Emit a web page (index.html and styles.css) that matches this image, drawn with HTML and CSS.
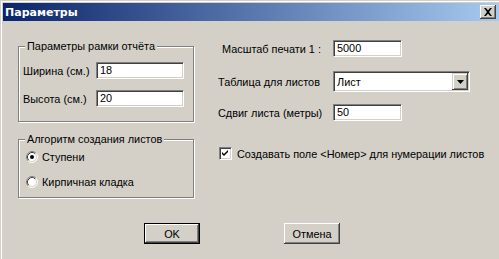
FILE: index.html
```html
<!DOCTYPE html>
<html lang="ru">
<head>
<meta charset="utf-8">
<title>Параметры</title>
<link rel="stylesheet" href="styles.css">
</head>
<body>
<div class="window">
  <div class="titlebar">
    <span class="title">Параметры</span>
    <span class="close"><svg width="10" height="8" viewBox="0 0 10 8"><path d="M1 0 L3 0 L5 2.5 L7 0 L9 0 L6 4 L9 8 L7 8 L5 5.5 L3 8 L1 8 L4 4 Z" fill="#000"/></svg></span>
  </div>
  <div class="client">
    <div class="main">
      <div class="left">
        <fieldset class="group g1">
          <legend>Параметры рамки отчёта</legend>
          <div class="g1-rows">
            <div class="frow"><span class="flabel">Ширина (см.)</span><div class="edit w88">18</div></div>
            <div class="frow"><span class="flabel">Высота (см.)</span><div class="edit w88">20</div></div>
          </div>
        </fieldset>
        <fieldset class="group g2">
          <legend>Алгоритм создания листов</legend>
          <div class="radios">
            <div class="radio-row">
              <svg class="radio" width="12" height="12" viewBox="0 0 12 12">
                <circle cx="6" cy="6" r="5" fill="#fff"/>
                <path d="M2.11 9.89 A5.5 5.5 0 0 1 9.89 2.11" fill="none" stroke="#808080"/>
                <path d="M9.89 2.11 A5.5 5.5 0 0 1 2.11 9.89" fill="none" stroke="#fff"/>
                <path d="M2.82 9.18 A4.5 4.5 0 0 1 9.18 2.82" fill="none" stroke="#404040"/>
                <path d="M9.18 2.82 A4.5 4.5 0 0 1 2.82 9.18" fill="none" stroke="#d4d0c8"/>
                <circle cx="6" cy="6" r="2" fill="#000"/>
              </svg>
              <span>Ступени</span>
            </div>
            <div class="radio-row">
              <svg class="radio" width="12" height="12" viewBox="0 0 12 12">
                <circle cx="6" cy="6" r="5" fill="#fff"/>
                <path d="M2.11 9.89 A5.5 5.5 0 0 1 9.89 2.11" fill="none" stroke="#808080"/>
                <path d="M9.89 2.11 A5.5 5.5 0 0 1 2.11 9.89" fill="none" stroke="#fff"/>
                <path d="M2.82 9.18 A4.5 4.5 0 0 1 9.18 2.82" fill="none" stroke="#404040"/>
                <path d="M9.18 2.82 A4.5 4.5 0 0 1 2.82 9.18" fill="none" stroke="#d4d0c8"/>
              </svg>
              <span>Кирпичная кладка</span>
            </div>
          </div>
        </fieldset>
      </div>
      <div class="right">
        <div class="rrow r1"><span class="rlabel ind">Масштаб печати 1 :</span><div class="edit w69">5000</div></div>
        <div class="rrow r2"><span class="rlabel">Таблица для листов</span>
          <div class="combo"><span class="combo-text">Лист</span><span class="combo-btn"><svg width="7" height="4" viewBox="0 0 7 4"><path d="M0 0 H7 L3.5 4 Z" fill="#000"/></svg></span></div>
        </div>
        <div class="rrow r3"><span class="rlabel">Сдвиг листа (метры)</span><div class="edit w69">50</div></div>
        <div class="check-row">
          <span class="checkbox"><svg width="9" height="9" viewBox="0 0 9 9"><path d="M1 3 L3 5 L7 1 L7 3 L3 7 L1 5 Z" fill="#000"/></svg></span>
          <span class="nowrap">Создавать поле &lt;Номер&gt; для нумерации листов</span>
        </div>
      </div>
    </div>
    <div class="buttons">
      <div class="btn default"><span class="btn-face">OK</span></div>
      <div class="btn"><span class="btn-face">Отмена</span></div>
    </div>
  </div>
</div>
</body>
</html>
```
FILE: styles.css
```css
* { box-sizing: border-box; }
html, body {
  margin: 0;
  padding: 0;
}
body {
  width: 499px;
  height: 259px;
  overflow: hidden;
  background: #d4d0c8;
  font-family: "Liberation Sans", Arial, sans-serif;
  font-size: 10.9px;
  color: #000;
  white-space: nowrap;
}
.window {
  width: 499px;
  height: 259px;
  padding: 3px 0 0 3px;
  box-shadow: inset 1px 1px 0 #d4d0c8, inset 2px 2px 0 #fff;
}
.titlebar {
  height: 18px;
  display: flex;
  align-items: center;
  justify-content: space-between;
  padding: 0 2px 0 2px;
  background: linear-gradient(to right, #0a246a, #a6caf0);
}
.title {
  font-family: "DejaVu Sans", sans-serif;
  font-weight: bold;
  font-size: 11px;
  color: #fff;
}
.close {
  width: 16px;
  height: 14px;
  display: flex;
  align-items: center;
  justify-content: center;
  background: #d4d0c8;
  box-shadow: inset -1px -1px 0 #404040, inset 1px 1px 0 #fff, inset -2px -2px 0 #808080;
  margin-right: 1px;
}
.close svg { display: block; margin-top: -1px; }
.client {
  padding-left: 15px;
}
.main {
  display: flex;
}
.left {
  width: 176px;
  flex: none;
  margin-top: 19px;
  display: flex;
  flex-direction: column;
}
.group {
  margin: 0;
  padding: 0;
  min-width: 0;
  border: 1px solid #808080;
  box-shadow: inset 1px 1px 0 #fff, 1px 1px 0 #fff;
}
.group legend {
  margin-left: 6px;
  padding: 0 2px;
  line-height: 13px;
  background: #d4d0c8;
}
.g1-rows {
  padding: 9px 0 14px 4px;
  display: flex;
  flex-direction: column;
  gap: 11px;
}
.frow {
  display: flex;
  align-items: center;
  height: 17px;
}
.flabel { width: 73px; flex: none; }
.edit {
  flex: none;
  height: 17px;
  line-height: 13px;
  background: #fff;
  border: 1px solid;
  border-color: #808080 #fff #fff #808080;
  box-shadow: inset 1px 1px 0 #404040, inset -1px -1px 0 #d4d0c8;
  padding-top: 1px;
  padding-left: 3px;
}
.w88 { width: 88px; }
.w69 { width: 69px; }
.g2 { margin-top: 11px; }
.radios {
  padding: 4px 0 9px 7px;
  display: flex;
  flex-direction: column;
  gap: 12px;
}
.radio-row {
  display: flex;
  align-items: center;
  height: 13px;
  gap: 4px;
}
.radio { display: block; flex: none; }
.right {
  flex: none;
  width: 270px;
  margin-left: 24px;
  margin-top: 19px;
  display: flex;
  flex-direction: column;
}
.rrow {
  display: flex;
  align-items: center;
}
.rlabel { width: 115px; flex: none; }
.rlabel.ind { padding-left: 4px; }
.r2 { margin-top: 14px; }
.r3 { margin-top: 12px; }
.combo {
  flex: none;
  width: 137px;
  height: 21px;
  display: flex;
  align-items: center;
  justify-content: space-between;
  background: #fff;
  border: 1px solid;
  border-color: #808080 #fff #fff #808080;
  box-shadow: inset 1px 1px 0 #404040, inset -1px -1px 0 #d4d0c8;
  padding: 1px 1px 1px 3px;
}
.combo-btn {
  width: 16px;
  height: 17px;
  display: flex;
  align-items: center;
  justify-content: center;
  background: #d4d0c8;
  box-shadow: inset -1px -1px 0 #404040, inset 1px 1px 0 #d4d0c8, inset 2px 2px 0 #fff, inset -2px -2px 0 #808080;
}
.combo-btn svg { display: block; }
.check-row {
  margin-top: 26px;
  margin-left: 1px;
  display: flex;
  align-items: center;
  gap: 5px;
}
.checkbox {
  flex: none;
  width: 13px;
  height: 13px;
  display: flex;
  align-items: center;
  justify-content: center;
  background: #fff;
  border: 1px solid;
  border-color: #808080 #fff #fff #808080;
  box-shadow: inset 1px 1px 0 #404040, inset -1px -1px 0 #d4d0c8;
}
.checkbox svg { display: block; }
.buttons {
  margin-top: 25px;
  padding-left: 126px;
  display: flex;
  gap: 84px;
}
.btn {
  width: 56px;
  height: 21px;
  display: flex;
  background: #d4d0c8;
  box-shadow: inset -1px -1px 0 #404040, inset 1px 1px 0 #fff, inset -2px -2px 0 #808080;
}
.btn.default {
  border: 1px solid #000;
}
.btn-face {
  flex: 1;
  display: flex;
  align-items: center;
  justify-content: center;
}
```
